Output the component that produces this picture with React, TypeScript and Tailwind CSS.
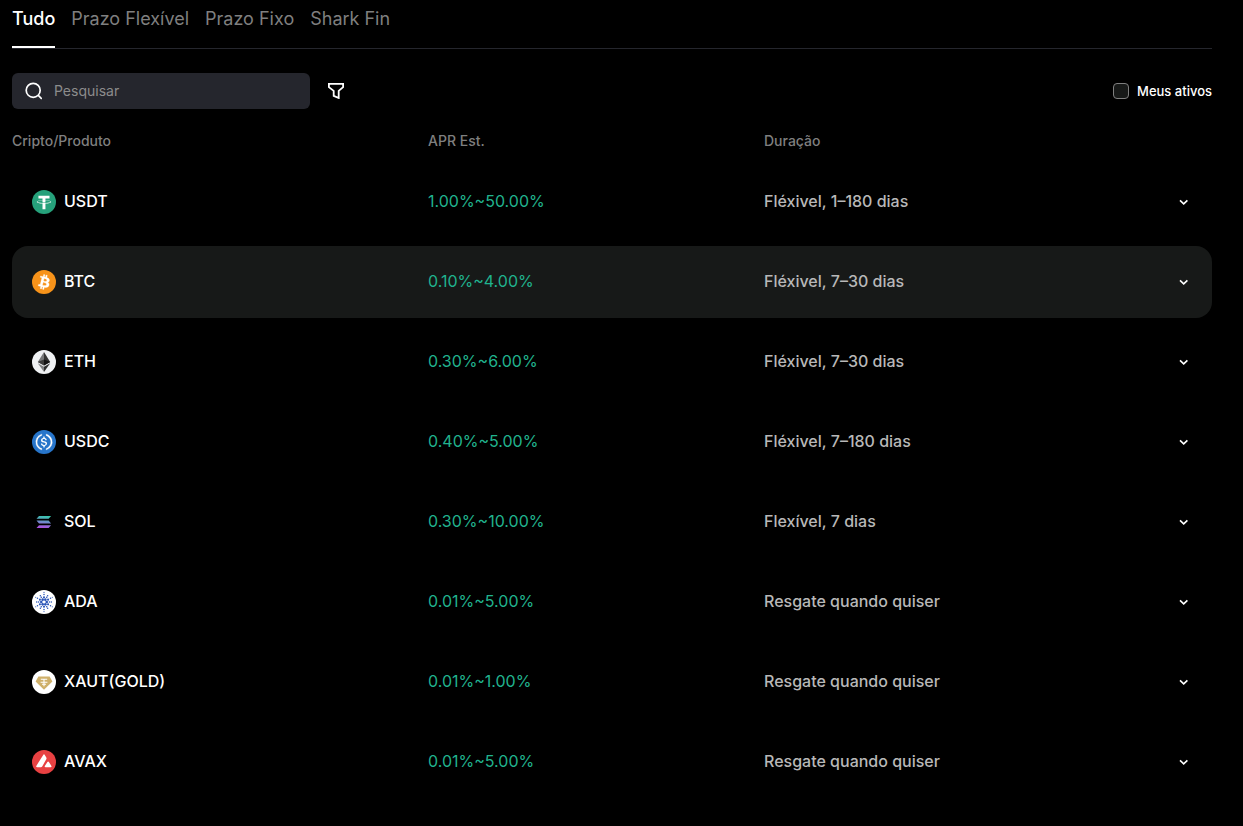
import { useState } from "react";
import type { ReactNode } from "react";
import { clsx } from "clsx";

const tabs = ["Tudo", "Prazo Flexível", "Prazo Fixo", "Shark Fin"];

type Product = {
  symbol: string;
  apr: string;
  duration: string;
  icon: ReactNode;
};

const products: Product[] = [
  { symbol: "USDT", apr: "1.00%~50.00%", duration: "Fléxivel, 1–180 dias", icon: <TetherIcon /> },
  { symbol: "BTC", apr: "0.10%~4.00%", duration: "Fléxivel, 7–30 dias", icon: <BitcoinIcon /> },
  { symbol: "ETH", apr: "0.30%~6.00%", duration: "Fléxivel, 7–30 dias", icon: <EthereumIcon /> },
  { symbol: "USDC", apr: "0.40%~5.00%", duration: "Fléxivel, 7–180 dias", icon: <UsdCoinIcon /> },
  { symbol: "SOL", apr: "0.30%~10.00%", duration: "Flexível, 7 dias", icon: <SolanaIcon /> },
  { symbol: "ADA", apr: "0.01%~5.00%", duration: "Resgate quando quiser", icon: <CardanoIcon /> },
  { symbol: "XAUT(GOLD)", apr: "0.01%~1.00%", duration: "Resgate quando quiser", icon: <GoldIcon /> },
  { symbol: "AVAX", apr: "0.01%~5.00%", duration: "Resgate quando quiser", icon: <AvalancheIcon /> },
];

export default function App() {
  const [activeTab, setActiveTab] = useState("Tudo");
  const [selected, setSelected] = useState("BTC");

  return (
    <main className="min-h-screen bg-black pl-3 pr-[31px] pb-6 font-[Inter,sans-serif] text-white">
      <nav className="flex gap-4 border-b border-[#25262d]">
        {tabs.map((tab) => (
          <button
            key={tab}
            type="button"
            onClick={() => setActiveTab(tab)}
            className={clsx(
              "h-12 border-b-2 pb-2 text-lg leading-7",
              tab === activeTab
                ? "border-white font-medium text-white"
                : "border-transparent text-[#7f7f7f]",
            )}
          >
            {tab}
          </button>
        ))}
      </nav>

      <div className="mt-6 flex items-center">
        <label className="flex h-9 w-[298px] items-center gap-3 rounded-md bg-[#25262d] pl-3 pr-3">
          <SearchIcon />
          <input
            type="text"
            placeholder="Pesquisar"
            aria-label="Pesquisar"
            className="min-w-0 flex-1 bg-transparent text-sm outline-none placeholder:text-[#8c8c8c]"
          />
        </label>
        <button type="button" aria-label="Filtrar" className="ml-[18px]">
          <FilterIcon />
        </button>
        <label className="ml-auto flex items-center gap-2 text-[13px] font-medium">
          <input
            type="checkbox"
            className="size-4 appearance-none rounded border border-[#7f7f7f] bg-[#171918] checked:bg-[#20b38e]"
          />
          <span className="pt-0.5">Meus ativos</span>
        </label>
      </div>

      <table className="mt-[7px] w-full table-fixed border-separate border-spacing-x-0 border-spacing-y-2 text-left">
        <thead>
          <tr className="h-[34px] text-sm text-[#7f7f7f]">
            <th className="w-26/75 p-0 font-medium">Cripto/Produto</th>
            <th className="w-7/25 p-0 font-medium">APR Est.</th>
            <th className="p-0 font-medium">Duração</th>
            <th className="w-14 p-0" />
          </tr>
        </thead>
        <tbody>
          {products.map((product) => (
            <tr
              key={product.symbol}
              className={clsx("h-[72px] font-medium", product.symbol === selected && "bg-[#171918]")}
            >
              <td className="rounded-l-2xl p-0 pl-5">
                <div className="flex items-center gap-2">
                  {product.icon}
                  <span className="pb-0.5">{product.symbol}</span>
                </div>
              </td>
              <td className="p-0 pb-0.5 font-normal text-[#20b38e]">{product.apr}</td>
              <td className="p-0 pb-0.5 text-[#b8b8b8]">{product.duration}</td>
              <td className="rounded-r-2xl p-0 pr-5">
                <button
                  type="button"
                  aria-label={`Abrir ${product.symbol}`}
                  onClick={() => setSelected(product.symbol)}
                  className="ml-auto block"
                >
                  <ChevronIcon />
                </button>
              </td>
            </tr>
          ))}
        </tbody>
      </table>
    </main>
  );
}

function SearchIcon() {
  return (
    <svg viewBox="0 0 18 18" className="size-[18px] shrink-0" fill="none" stroke="white" strokeWidth="1.7" aria-hidden="true">
      <circle cx="9.2" cy="8.3" r="7" />
      <path d="M14.1 13.2 17.8 17" />
    </svg>
  );
}

function FilterIcon() {
  return (
    <svg viewBox="0 0 16 16" className="size-4" fill="none" stroke="white" strokeWidth="1.8" aria-hidden="true">
      <path d="M.9.9h14.2v3.2l-4.4 3.8v7.1l-5-2.1V7.9L.9 4.1z" />
    </svg>
  );
}

function ChevronIcon() {
  return (
    <svg viewBox="0 0 16 16" className="size-4" fill="none" stroke="white" strokeWidth="1.6" aria-hidden="true">
      <path d="m4 6.3 3.7 3.5 3.7-3.5" />
    </svg>
  );
}

function TetherIcon() {
  return (
    <svg viewBox="0 0 32 32" className="size-6 shrink-0" aria-hidden="true">
      <circle cx="16" cy="16" r="16" fill="#26a17b" />
      <path
        fill="#fff"
        d="M17.922 17.383v-.002c-.11.008-.677.042-1.942.042-1.01 0-1.721-.03-1.971-.042v.003c-3.888-.171-6.79-.848-6.79-1.658 0-.809 2.902-1.486 6.79-1.66v2.644c.254.018.982.061 1.988.061 1.207 0 1.812-.05 1.925-.06v-2.643c3.88.173 6.775.85 6.775 1.658 0 .81-2.895 1.485-6.775 1.657m0-3.59v-2.366h5.414V7.819H8.595v3.608h5.414v2.365c-4.4.202-7.709 1.074-7.709 2.118 0 1.044 3.309 1.915 7.709 2.118v7.582h3.913v-7.584c4.393-.202 7.694-1.073 7.694-2.116 0-1.043-3.301-1.914-7.694-2.117"
      />
    </svg>
  );
}

function BitcoinIcon() {
  return (
    <svg viewBox="0 0 32 32" className="size-6 shrink-0" aria-hidden="true">
      <circle cx="16" cy="16" r="16" fill="#f7931a" />
      <path
        fill="#fff"
        stroke="#fff"
        strokeWidth=".4"
        d="M23.189 14.02c.314-2.096-1.283-3.223-3.465-3.975l.708-2.84-1.728-.43-.69 2.765c-.454-.114-.92-.22-1.385-.326l.695-2.783L15.596 6l-.708 2.839c-.376-.086-.746-.17-1.104-.26l.002-.009-2.384-.595-.46 1.846s1.283.294 1.256.312c.7.175.826.638.805 1.006l-.806 3.235c.048.012.11.03.18.057l-.183-.045-1.13 4.532c-.086.212-.303.531-.793.41.018.025-1.256-.313-1.256-.313l-.858 1.978 2.25.561c.418.105.828.215 1.231.318l-.715 2.872 1.727.43.708-2.84c.472.127.93.245 1.378.357l-.706 2.828 1.728.43.715-2.866c2.948.558 5.164.333 6.097-2.333.752-2.146-.037-3.385-1.588-4.192 1.13-.26 1.98-1.003 2.207-2.538zm-3.95 5.538c-.533 2.147-4.148.986-5.32.695l.95-3.805c1.172.293 4.929.872 4.37 3.11zm.535-5.569c-.487 1.953-3.495.96-4.47.717l.86-3.45c.975.243 4.118.696 3.61 2.733z"
      />
    </svg>
  );
}

function EthereumIcon() {
  return (
    <svg viewBox="0 0 24 24" className="size-6 shrink-0" aria-hidden="true">
      <circle cx="12" cy="12" r="12" fill="#eff1f3" />
      <path fill="#77787a" d="M12 2v13.6l-6.2-3.5z" />
      <path fill="#343434" d="M12 2v13.6l6.2-3.5z" />
      <path fill="#3c3c3b" d="m5.8 12.1 6.2-2.7v6.2z" />
      <path fill="#141414" d="m18.2 12.1-6.2-2.7v6.2z" />
      <path fill="#828384" d="m5.8 13.3 6.2 3.5V22z" />
      <path fill="#2f3030" d="M18.2 13.3 12 16.8V22z" />
    </svg>
  );
}

function UsdCoinIcon() {
  return (
    <svg viewBox="0 0 32 32" className="size-6 shrink-0" aria-hidden="true">
      <circle cx="16" cy="16" r="16" fill="#2775ca" />
      <path
        fill="#fff"
        d="M20.022 18.124c0-2.124-1.28-2.852-3.84-3.156-1.828-.243-2.193-.728-2.193-1.578 0-.85.61-1.396 1.828-1.396 1.097 0 1.707.364 2.011 1.275a.458.458 0 00.427.303h.975a.416.416 0 00.427-.425v-.06a3.04 3.04 0 00-2.743-2.489V9.142c0-.243-.183-.425-.487-.486h-.915c-.243 0-.426.182-.487.486v1.396c-1.829.242-2.986 1.456-2.986 2.974 0 2.002 1.218 2.791 3.778 3.095 1.707.303 2.255.668 2.255 1.639 0 .97-.853 1.638-2.011 1.638-1.585 0-2.133-.667-2.316-1.578-.06-.242-.244-.364-.427-.364h-1.036a.416.416 0 00-.426.425v.06c.243 1.518 1.219 2.61 3.23 2.914v1.457c0 .242.183.425.487.485h.915c.243 0 .426-.182.487-.485V21.34c1.829-.303 3.047-1.578 3.047-3.217z"
      />
      <path
        fill="#fff"
        stroke="#fff"
        strokeWidth=".4"
        d="M12.892 24.497c-4.754-1.7-7.192-6.98-5.424-11.653.914-2.55 2.925-4.491 5.424-5.402.244-.121.365-.303.365-.607v-.85c0-.242-.121-.424-.365-.485-.061 0-.183 0-.244.06a10.895 10.895 0 00-7.13 13.717c1.096 3.4 3.717 6.01 7.13 7.102.244.121.488 0 .548-.243.061-.06.061-.122.061-.243v-.85c0-.182-.182-.424-.365-.546zm6.46-18.936c-.244-.122-.488 0-.548.242-.061.061-.061.122-.061.243v.85c0 .243.182.485.365.607 4.754 1.7 7.192 6.98 5.424 11.653-.914 2.55-2.925 4.491-5.424 5.402-.244.121-.365.303-.365.607v.85c0 .242.121.424.365.485.061 0 .183 0 .244-.06a10.895 10.895 0 007.13-13.717c-1.096-3.46-3.778-6.07-7.13-7.162z"
      />
    </svg>
  );
}

function SolanaIcon() {
  return (
    <svg viewBox="0 0 24 24" className="size-6 shrink-0" aria-hidden="true">
      <defs>
        <linearGradient id="solana" gradientUnits="userSpaceOnUse" x1="13" y1="5" x2="11" y2="19">
          <stop offset="0" stopColor="#2fd0a8" />
          <stop offset=".5" stopColor="#6f8bcb" />
          <stop offset="1" stopColor="#b548e2" />
        </linearGradient>
      </defs>
      <circle cx="12" cy="12" r="12" fill="#000" />
      <path
        fill="url(#solana)"
        d="M7 6h12.1l-2.5 2.8H4.5zM4.5 10.6h12.1l2.5 2.8H7zM7 15.2h12.1L16.6 18H4.5z"
      />
    </svg>
  );
}

// Rings of the Cardano mark: distance from centre, dot radius, dot count, start angle
const cardanoRings = [
  [2.7, 1.3, 6, 0],
  [4.7, 1.05, 6, 30],
  [5.4, 0.8, 6, 0],
  [7.3, 0.75, 6, 0],
  [7.5, 0.75, 6, 30],
  [9.6, 0.55, 6, 30],
];

function CardanoIcon() {
  return (
    <svg viewBox="0 0 24 24" className="size-6 shrink-0" fill="#2a55b8" aria-hidden="true">
      <circle cx="12" cy="12" r="12" fill="#fff" />
      {cardanoRings.map(([distance, radius, count, start], ring) =>
        Array.from({ length: count }, (_, i) => {
          const angle = ((start + (360 / count) * i) * Math.PI) / 180;
          return (
            <circle
              key={`${ring}-${i}`}
              cx={12 + distance * Math.cos(angle)}
              cy={12 + distance * Math.sin(angle)}
              r={radius}
            />
          );
        }),
      )}
    </svg>
  );
}

function GoldIcon() {
  return (
    <svg viewBox="0 0 24 24" className="size-6 shrink-0" aria-hidden="true">
      <circle cx="12" cy="12" r="12" fill="#fff" />
      <path fill="#cfb06a" d="M6.4 6.4h11.2l2.8 5-8.4 8.3-8.4-8.3z" />
      <path fill="none" stroke="#fff" strokeWidth="1.1" d="M8.8 9.2h6.4M12 9.2v7M8.6 12.3h6.8M10 14.2h4" />
    </svg>
  );
}

function AvalancheIcon() {
  return (
    <svg viewBox="0 0 24 24" className="size-6 shrink-0" aria-hidden="true">
      <circle cx="12" cy="12" r="12" fill="#e84142" />
      <path
        fill="#fff"
        d="M11.2 4.9c.4-.8 1.2-.8 1.6 0l1.5 2.7c.3.6.3 1.1 0 1.7l-4.1 7.1c-.3.5-.7.8-1.3.8H5.2c-.9 0-1.3-.6-.9-1.3zM15.4 12.1c.4-.7 1.1-.7 1.5 0l2.5 3.9c.4.7 0 1.2-.8 1.2h-5c-.8 0-1.2-.5-.8-1.2z"
      />
    </svg>
  );
}
